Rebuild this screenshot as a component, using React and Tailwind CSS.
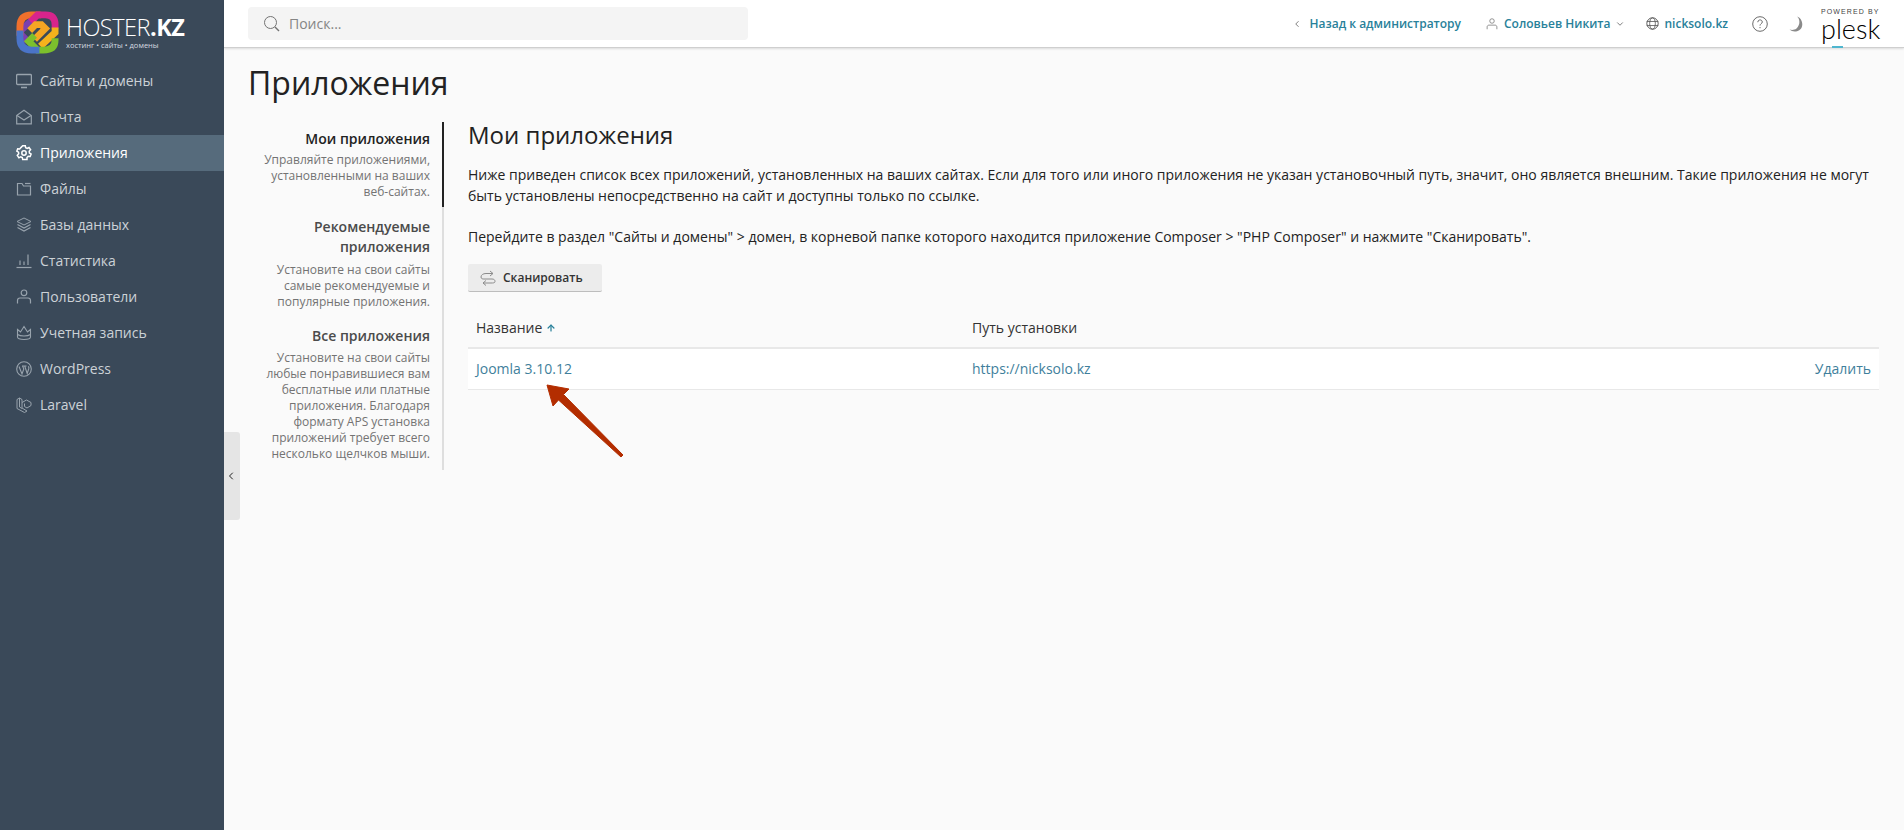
import { ChevronLeft, ChevronDown, ArrowUp } from 'lucide-react';

function Icon({ children, className = 'w-4 h-4' }) {
  return (
    <svg viewBox="0 0 16 16" fill="none" stroke="currentColor" strokeWidth="1" className={className}>
      {children}
    </svg>
  );
}

const navItems = [
  { label: 'Сайты и домены', icon: <><rect x="0.6" y="1.500" width="14.800" height="10" rx="1" strokeWidth="1.300" /><path d="M5 14.500h6" strokeWidth="1.600" /></> },
  { label: 'Почта', icon: <><path d="M.7 6.500 8 1.200l7.300 5.300v8.300H.7z" strokeWidth="1.200" /><path d="M1 6.500 8 11l7-4.500" strokeWidth="1.200" /></> },
  { label: 'Приложения', active: true, icon: <><path d="M6.700.8h2.600l.4 2 1.500.7 1.800-1 1.600 2.200-1.400 1.500.2 1.800 1.700 1-.9 2.500-2-.2-1.200 1.300v2H6.700l-.4-2-1.600-.8-1.800 1L1.300 10.300l1.400-1.500-.2-1.600-1.700-1 .9-2.500 2 .2 1.200-1.300z" strokeWidth="1.500" /><circle cx="8" cy="8" r="2.200" strokeWidth="1.500" /></> },
  { label: 'Файлы', icon: <><path d="M1.500 2.500h4.500l1.500 2.500h7v9h-13z" strokeWidth="1.200" /><path d="M9 2.500h5.500" strokeWidth="1.200" /></> },
  { label: 'Базы данных', icon: <><path d="M8 1 15 4.500 8 8 1 4.500z" /><path d="M1.500 7.500 8 11l6.500-3.500M1.500 10.500 8 14l6.500-3.500" strokeWidth="1.200" /></> },
  { label: 'Статистика', icon: <><path d="M.5 14.500h15" strokeWidth="1.200" /><path d="M4 12V7.500M8 12V8.500M12 12V1.500" strokeWidth="1.200" /></> },
  { label: 'Пользователи', icon: <><circle cx="8" cy="3.800" r="2.800" strokeWidth="1.200" /><path d="M1.500 14.500V11.500c0-1.500 1-2.500 2.500-2.500h8c1.500 0 2.500 1 2.500 2.500v3" strokeWidth="1.200" /></> },
  { label: 'Учетная запись', icon: <><path d="M1.500 4.500 4.500 7 8 1.500 11.500 7l3-2.500V12c0 1.500-2 2.500-6.500 2.500S1.500 13.500 1.500 12z" strokeWidth="1.100" /><path d="M1.500 9.500c3 2 10 2 13 0" strokeWidth="1.100" /></> },
  { label: 'WordPress', icon: <><circle cx="8" cy="8" r="7.300" strokeWidth="1.100" /><path d="M3 5.500 6 13l1.800-5-1.200-3M6 5h4.500M8.700 5l2.500 7.500 1.500-4.500c.4-1.500 0-2-.3-2.800" strokeWidth="1.100" /></> },
  { label: 'Laravel', icon: <><path d="M1 2.500 3.500 1 6 2.500v8.500l5 3-2.500 1.500L1 11.500zM3.500 1v9l2.500 1.500M6 5.500l4.500-2.500L15 5.500v3l-4 2.500L8.500 9.500V6.500" strokeWidth="1" /></> },
];

const sections = [
  { title: ['Мои приложения'], text: ['Управляйте приложениями,', 'установленными на ваших', 'веб-сайтах.'], active: true, box: 'pt-[7px] pb-[7px]', gap: 'mt-[3px]' },
  { title: ['Рекомендуемые', 'приложения'], text: ['Установите на свои сайты', 'самые рекомендуемые и', 'популярные приложения.'], box: 'pt-[10px] pb-[6px]', gap: 'mt-[5px]' },
  { title: ['Все приложения'], text: ['Установите на свои сайты', 'любые понравившиеся вам', 'бесплатные или платные', 'приложения. Благодаря', 'формату APS установка', 'приложений требует всего', 'несколько щелчков мыши.'], box: 'pt-[10px] pb-[6px]', gap: 'mt-[4px]' },
];

function Logo() {
  return (
    <div className="flex items-center h-[63px] pl-4 pt-[1px]">
      <svg viewBox="0 0 44 44" className="w-[43px] h-[43px] shrink-0" fill="none" strokeWidth="7">
        <path d="M12 31 L6 25 Q3 22 6 19 L18 8" stroke="#7a3fb0" />
        <path d="M4 24 V16 Q4 4 16 4 H24" stroke="#f0702c" strokeLinecap="round" />
        <path d="M15 11 L22 4 H30 Q40 4 40 14 V18" stroke="#d8248c" />
        <path d="M40 17 V22 L25 36" stroke="#f5b21c" />
        <path d="M14 20 L20 14 H26 L30 18 L19 29" stroke="#f5a623" />
        <path d="M40 28 V30 Q40 40 28 40 H22 L13 31 L19 25" stroke="#7cc02c" />
        <path d="M4 20 V28 Q4 40 16 40 H24" stroke="#4a74c8" />
      </svg>
      <div className="ml-[7px] text-white leading-none">
        <div className="text-[23.500px] h-[25px] font-light tracking-[-0.5px] leading-[25px]">
          HOSTER<span className="font-bold">.KZ</span>
        </div>
        <div className="text-[7.500px] leading-[9px] mt-[1px] text-[#d5dbe0]">хостинг • сайты • домены</div>
      </div>
    </div>
  );
}

function Sidebar() {
  return (
    <aside className="w-[224px] shrink-0 bg-[#3a4959]">
      <Logo />
      <nav>
        {navItems.map((item) => (
          <div
            key={item.label}
            className={`h-9 flex items-center pl-4 text-sm ${item.active ? 'bg-[#566b7c] text-white' : 'text-[#ccd2d7]'}`}
          >
            <span className={item.active ? 'text-white' : 'text-[#98a3ad]'}>
              <Icon>{item.icon}</Icon>
            </span>
            <span className="ml-2">{item.label}</span>
          </div>
        ))}
      </nav>
    </aside>
  );
}

function Header() {
  return (
    <header className="h-[48px] shrink-0 bg-white border-b border-[#cfcfcf] shadow-[0_1px_2px_rgba(0,0,0,0.12)] flex items-center pl-6 pr-6">
      <div className="w-[500px] h-[33px] bg-[#f4f4f4] rounded-[4px] flex items-center pl-4 text-[#858585] text-sm">
        <svg viewBox="0 0 16 16" fill="none" stroke="#737373" className="w-[16px] h-[16px]">
          <circle cx="6.500" cy="6.500" r="6" />
          <path d="m11 11 4 4" strokeWidth="1.500" />
        </svg>
        <span className="ml-[9px]">Поиск...</span>
      </div>
      <div className="ml-auto h-full flex items-center text-[#28819a] font-semibold text-[12px]">
        <ChevronLeft className="w-[10px] h-[10px] text-[#666]" />
        <span className="ml-[7px]">Назад к администратору</span>
        <span className="ml-[25px] text-[#737373]">
          <Icon className="w-[12px] h-[14px]">
            <circle cx="8" cy="4" r="3" />
            <path d="M1.500 15v-3c0-1.500 1-2.500 2.500-2.500h8c1.500 0 2.500 1 2.500 2.500v3" />
          </Icon>
        </span>
        <span className="ml-[6px]">Соловьев Никита</span>
        <ChevronDown className="w-[10px] h-[10px] ml-[5px] text-[#666]" />
        <span className="ml-[21px] text-[#555]">
          <Icon className="w-[13px] h-[13px]">
            <circle cx="8" cy="8" r="7" strokeWidth="1.200" />
            <ellipse cx="8" cy="8" rx="3.500" ry="7" />
            <path d="M1 5.500h14M1 10.500h14" />
          </Icon>
        </span>
        <span className="ml-[5px]">nicksolo.kz</span>
        <span className="ml-[24px] text-[#6b6b6b]">
          <svg viewBox="0 0 16 16" fill="none" stroke="currentColor" className="w-[16px] h-[16px]">
            <circle cx="8" cy="8" r="7.300" />
            <path d="M5.800 6.200c0-3 4.500-3 4.500-.2 0 1.600-2.300 1.800-2.300 3.600" />
            <path d="M8 11v1.200" />
          </svg>
        </span>
        <span className="ml-[21px] text-[#6b6b6b]">
          <svg viewBox="0 0 14 16" className="w-[14px] h-[16px]" fill="#8a8a8a">
            <path d="M8 .5c3 2.500 3.500 8-.5 12C5.500 14 3 14.300 .5 13.500c3.800 3.500 11 2.200 12.500-3C14.200 6 11.500 1.500 8 .5z" />
          </svg>
        </span>
        <div className="ml-[18px] w-[59px] self-start mt-[8px] text-black font-normal leading-none">
          <div className="text-[7px] tracking-[1.100px] text-[#444] leading-[8px] font-['Liberation_Sans',sans-serif] whitespace-nowrap">POWERED BY</div>
          <div className="relative text-[27px] h-[26px] leading-[26px] font-light font-['Lato',sans-serif]">
            plesk
            <span className="absolute left-[11px] top-[30px] w-[11px] h-[2px] bg-[#4fb6cf]" />
          </div>
        </div>
      </div>
    </header>
  );
}

function SideTabs() {
  return (
    <div className="w-[196px] shrink-0 h-[348px] border-r-2 border-[#dedede]">
      {sections.map((s) => (
        <div key={s.title[0]} className={`relative pr-[12px] text-right ${s.box}`}>
          {s.active && <span className="absolute right-[-2px] top-0 bottom-0 w-[2px] bg-[#222]" />}
          {s.title.map((t) => (
            <div key={t} className={`text-sm leading-[20px] font-semibold ${s.active ? 'text-[#222]' : 'text-[#4b4b4b]'}`}>{t}</div>
          ))}
          <div className={`${s.gap} text-[12px] leading-[16px] text-[#737373]`}>
            {s.text.map((t) => <div key={t}>{t}</div>)}
          </div>
        </div>
      ))}
    </div>
  );
}

function Content() {
  return (
    <div className="relative flex-1 ml-[24px] mr-[25px]">
      <h2 className="text-[24px] leading-[32px] text-[#222] mt-[-3px]">Мои приложения</h2>
      <p className="text-sm leading-[21px] text-[#222] mt-[13px]">
        Ниже приведен список всех приложений, установленных на ваших сайтах. Если для того или иного приложения не указан установочный путь, значит, оно является внешним. Такие приложения не могут быть установлены непосредственно на сайт и доступны только по ссылке.
      </p>
      <p className="text-sm leading-[21px] text-[#222] mt-[20px]">
        Перейдите в раздел "Сайты и домены" &gt; домен, в корневой папке которого находится приложение Composer &gt; "PHP Composer" и нажмите "Сканировать".
      </p>
      <button type="button" className="mt-[17px] h-[28px] w-[134px] flex items-center pl-[11px] bg-[#ececec] border-b border-[#bdbdbd] rounded-[2px] text-[12px] font-semibold text-[#333]">
        <svg viewBox="0 0 18 16" fill="none" stroke="#8c8c8c" className="w-[18px] h-[16px]">
          <path d="M11 1 14 3.500 11 6M14 3.500H7C4 3.500 2 5 2 7s2 2 3 2h8c2 0 3 1 3 2.500S14 13 12 13H4M7 10.500 4 13l3 2.500" />
        </svg>
        <span className="ml-[6px]">Сканировать</span>
      </button>
      <table className="w-full mt-[16px] text-sm border-collapse">
        <thead>
          <tr className="h-[40px] text-[#333] border-b-2 border-[#e8e8e8] text-left">
            <th className="font-normal pl-[8px] w-[504px]">
              Название <ArrowUp className="inline w-[10px] h-[10px] text-[#28819a] mb-[2px]" strokeWidth={3} />
            </th>
            <th className="font-normal">Путь установки</th>
            <th />
          </tr>
        </thead>
        <tbody>
          <tr className="h-[41px] bg-white border-b border-[#e8e8e8] text-[#3f7f9c]">
            <td className="pl-[8px]">Joomla 3.10.12</td>
            <td>https://nicksolo.kz</td>
            <td className="text-right pr-[8px]">Удалить</td>
          </tr>
        </tbody>
      </table>
      <svg viewBox="0 0 84 76" className="absolute left-[76px] top-[261px] w-[84px] h-[76px]">
        <path d="M3 2 L25 6 L19.500 11.500 L79 72 L77 74 L14.500 17 L9 23 Z" fill="#b32d00" stroke="#b32d00" strokeLinejoin="round" />
      </svg>
    </div>
  );
}

export default function App() {
  return (
    <div className="flex h-[830px] overflow-hidden bg-[#fafafa] font-['Open_Sans',sans-serif]">
      <Sidebar />
      <div className="relative flex-1 flex flex-col min-w-0">
        <Header />
        <button type="button" className="absolute left-0 top-[432px] w-4 h-[88px] bg-[#e5e5e5] rounded-r-[3px] flex items-center justify-center text-[#222]">
          <ChevronLeft className="w-[12px] h-[12px] -ml-[2px]" />
        </button>
        <h1 className="text-[32px] leading-[40px] ml-6 mt-[15px] text-[#222]">Приложения</h1>
        <div className="flex ml-6 mt-[19px]">
          <SideTabs />
          <Content />
        </div>
      </div>
    </div>
  );
}
